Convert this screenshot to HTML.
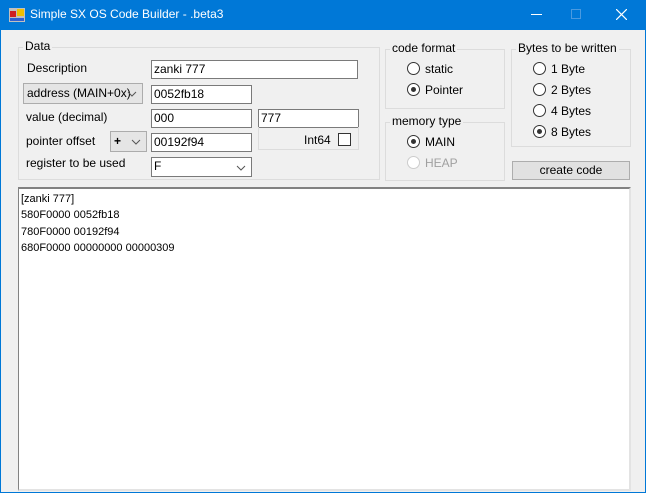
<!DOCTYPE html>
<html><head><style>
*{box-sizing:border-box;margin:0;padding:0}
body{width:646px;height:493px;overflow:hidden;background:#0078d7;font-family:"Liberation Sans","Noto Sans CJK JP",sans-serif;font-size:12px;color:#000;position:relative}
.a{position:absolute}
#win{left:1px;top:30px;width:644px;height:462px;background:#f0f0f0}
.title{left:30px;top:7px;color:#fff;font-size:12px}
.gb{position:absolute;border:1px solid #dcdcdc;}
.gl{position:absolute;background:#f0f0f0;padding:0 2px;font-size:12px;top:-9px;left:4px}
.tb{position:absolute;background:#fff;border:1px solid #7a7a7a;padding:2px 2px;font-size:12px;line-height:13px}
.cb{position:absolute;background:#e5e5e5;border:1px solid #acacac;padding:2px 3px;font-size:12px}
.chev{position:absolute;right:5px;top:4px;width:10px;height:8px}
.r{position:absolute;width:13px;height:13px;border:1px solid #333;border-radius:50%;background:#fff}
.r.on::after{content:"";position:absolute;left:3px;top:3px;width:5px;height:5px;border-radius:50%;background:#333}
.rl{position:absolute;font-size:12px}
</style></head><body>
<svg class="a" style="left:9px;top:8px" width="16" height="14"><rect x="0" y="0" width="16" height="14" fill="#c0c0c0"/><rect x="1" y="3" width="6" height="6" fill="#d02020"/><rect x="8" y="1" width="7" height="7" fill="#f0c000"/><rect x="1" y="10" width="14" height="3" fill="#3060d0"/></svg>
<div class="a title">Simple SX OS Code Builder - .beta3</div>
<div class="a" style="left:531px;top:14px;width:11px;height:1px;background:#fff"></div>
<div class="a" style="left:571px;top:9px;width:10px;height:10px;border:1px solid #4a9ae0"></div>
<svg class="a" style="left:616px;top:9px" width="11" height="11"><path d="M0 0L11 11M11 0L0 11" stroke="#fff" stroke-width="1.2"/></svg>
<div id="win" class="a">
 <div class="gb" style="left:17px;top:17px;width:362px;height:133px">
  <div class="gl">Data</div>
 </div>
 <div class="rl" style="left:26px;top:31px">Description</div>
 <div class="tb" style="left:150px;top:30px;width:207px;height:19px">zanki 777</div>
 <div class="cb" style="left:22px;top:53px;width:120px;height:21px">address (MAIN+0x)<svg class="chev" style="top:6px"><path d="M1 2L5 6L9 2" stroke="#555" fill="none"/></svg></div>
 <div class="tb" style="left:150px;top:55px;width:101px;height:19px">0052fb18</div>
 <div class="rl" style="left:25px;top:80px">value (decimal)</div>
 <div class="tb" style="left:150px;top:79px;width:101px;height:19px">000</div>
 <div class="tb" style="left:257px;top:79px;width:101px;height:19px">777</div>
 <div class="a" style="left:257px;top:97px;width:101px;height:23px;border:1px solid #dcdcdc;border-top:none"></div>
 <div class="rl" style="left:303px;top:103px">Int64</div>
 <div class="a" style="left:337px;top:103px;width:13px;height:13px;border:1px solid #333;background:#fff"></div>
 <div class="rl" style="left:25px;top:104px">pointer offset</div>
 <div class="cb" style="left:109px;top:101px;width:37px;height:21px;font-weight:bold">+<svg class="chev" style="top:6px"><path d="M1 2L5 6L9 2" stroke="#555" fill="none"/></svg></div>
 <div class="tb" style="left:150px;top:103px;width:101px;height:19px">00192f94</div>
 <div class="rl" style="left:25px;top:126px">register to be used</div>
 <div class="tb" style="left:150px;top:127px;width:101px;height:20px">F<svg class="chev" style="top:6px"><path d="M1 2L5 6L9 2" stroke="#555" fill="none"/></svg></div>

 <div class="gb" style="left:384px;top:19px;width:120px;height:60px"><div class="gl">code format</div></div>
 <div class="r" style="left:406px;top:32px"></div><div class="rl" style="left:424px;top:32px">static</div>
 <div class="r on" style="left:406px;top:53px"></div><div class="rl" style="left:424px;top:53px">Pointer</div>
 <div class="gb" style="left:384px;top:92px;width:120px;height:59px"><div class="gl">memory type</div></div>
 <div class="r on" style="left:406px;top:105px"></div><div class="rl" style="left:424px;top:105px">MAIN</div>
 <div class="r" style="left:406px;top:126px;border-color:#ccc"></div><div class="rl" style="left:424px;top:126px;color:#a0a0a0">HEAP</div>

 <div class="gb" style="left:510px;top:19px;width:120px;height:98px"><div class="gl">Bytes to be written</div></div>
 <div class="r" style="left:532px;top:32px"></div><div class="rl" style="left:550px;top:32px">1 Byte</div>
 <div class="r" style="left:532px;top:53px"></div><div class="rl" style="left:550px;top:53px">2 Bytes</div>
 <div class="r" style="left:532px;top:74px"></div><div class="rl" style="left:550px;top:74px">4 Bytes</div>
 <div class="r on" style="left:532px;top:95px"></div><div class="rl" style="left:550px;top:95px">8 Bytes</div>
 <div class="a" style="left:511px;top:131px;width:118px;height:19px;background:#e1e1e1;border:1px solid #adadad;text-align:center;line-height:17px">create code</div>

 <div class="a" style="left:17px;top:157px;width:613px;height:304px;background:#fff;border:1px solid #828282;border-top:2px solid #828282;border-bottom:2px solid #e3e3e3;border-right:2px solid #e3e3e3;padding:2px 2px;font-size:11px;line-height:16.3px">[zanki 777]<br>580F0000 0052fb18<br>780F0000 00192f94<br>680F0000 00000000 00000309</div>
</div>
</body></html>
